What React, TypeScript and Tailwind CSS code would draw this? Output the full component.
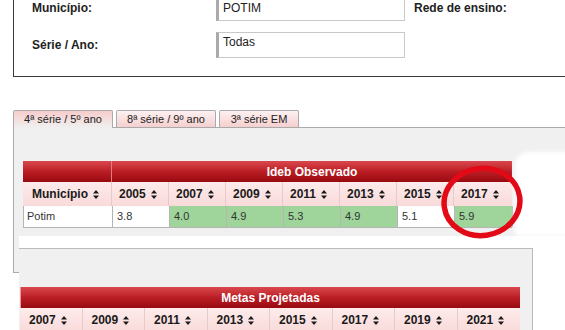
import React from 'react';

const years = ['2005', '2007', '2009', '2011', '2013', '2015', '2017'];
const ideb = [
    { v: '3.8', hit: false },
    { v: '4.0', hit: true },
    { v: '4.9', hit: true },
    { v: '5.3', hit: true },
    { v: '4.9', hit: true },
    { v: '5.1', hit: false },
    { v: '5.9', hit: true },
];
const metaYears = ['2007', '2009', '2011', '2013', '2015', '2017', '2019', '2021'];

const SortIcon = () => (
    <svg width="6" height="9" viewBox="0 0 6 9" className="inline-block ml-[5px] align-[-1px]" fill="currentColor">
        <path d="M3 0 6 3.6H0z M0 5.4h6L3 9z" />
    </svg>
);

const FieldBox = ({ value, h = 'h-[26px]' }: { value: string; h?: string }) => (
    <div className={`w-[189px] ${h} self-end bg-white border border-[#c8c8c8] border-l-[3px] border-l-[#aaa] pl-[4px] pt-[2px] text-[12px] leading-[14px] text-[#222]`}>
        {value}
    </div>
);

const redHead = 'bg-gradient-to-b from-[#d9474d] via-[#bb1d24] to-[#980a10] text-white font-bold text-[12px]';
const pinkHead = 'bg-gradient-to-b from-[#fdebeb] to-[#f9dada] font-bold text-[12px] text-[#1a1a1a]';

export default function App() {
    return (
        <div className="relative w-[565px] h-[330px] overflow-hidden bg-white font-['Liberation_Sans',Arial,sans-serif] text-[#222]">
            {/* filtros */}
            <div className="ml-[13px] -mt-[12px] h-[89px] w-[620px] border-l border-b border-[#3a3a3a] pt-[7px] pl-[18px]">
                <div className="flex items-center h-[26px]">
                    <span className="w-[184px] font-bold text-[12px]">Município:</span>
                    <FieldBox value="POTIM" h="h-[23px]" />
                    <span className="ml-[9px] font-bold text-[12px]">Rede de ensino:</span>
                </div>
                <div className="flex items-center h-[26px] mt-[11px]">
                    <span className="w-[184px] font-bold text-[12px]">Série / Ano:</span>
                    <FieldBox value="Todas" />
                </div>
            </div>

            {/* abas */}
            <div className="flex gap-[3px] ml-[13px] mt-[33px] h-[17px] items-end">
                <div className="relative z-10 w-[100px] h-[18px] -mb-px border border-b-0 border-[#aaa] rounded-t-[2px] bg-gradient-to-b from-[#f6cccc] to-[#f0f0f0] text-[11px] leading-[16px] text-center">
                    4ª série / 5º ano
                </div>
                <div className="w-[100px] h-[17px] border border-b-0 border-[#aaa] rounded-t-[2px] bg-gradient-to-b from-[#fdf1f1] to-[#f5cfcf] text-[11px] leading-[16px] text-center">
                    8ª série / 9º ano
                </div>
                <div className="w-[80px] h-[17px] border border-b-0 border-[#aaa] rounded-t-[2px] bg-gradient-to-b from-[#fdf1f1] to-[#f5cfcf] text-[11px] leading-[16px] text-center">
                    3ª série EM
                </div>
            </div>

            {/* Ideb observado */}
            <div className="ml-[13px] w-[600px] border-l border-t border-[#aaa] bg-[#f0f0f0] pt-[33px] pl-[9px] pb-[8px]">
                <div className="w-[489px]">
                    <div className={`flex h-[21px] ${redHead}`}>
                        <div className="w-[89px] border-r border-[#e27b7f]" />
                        <div className="flex-1 flex items-center justify-center">Ideb Observado</div>
                    </div>
                    <div className={`grid grid-cols-[89px_repeat(6,57px)_58px] h-[24px] ${pinkHead}`}>
                        <div className="flex items-center pl-[9px] border-r border-[#e8caca]">Município<SortIcon /></div>
                        {years.map((y, i) => (
                            <div key={y} className={`flex items-center pl-[7px] ${i < years.length - 1 ? 'border-r border-[#e8caca]' : ''}`}>
                                {y}<SortIcon />
                            </div>
                        ))}
                    </div>
                    <div className="grid grid-cols-[89px_repeat(6,57px)_58px] h-[22px] text-[11px] text-[#333] border-l border-b border-[#b5b5b5]">
                        <div className="flex items-center pl-[3px] bg-white border-r border-[#b5b5b5]">Potim</div>
                        {ideb.map((c, i) => (
                            <div key={i} className={`flex items-center pl-[4px] border-r border-[#b5b5b5] ${c.hit ? 'bg-[#9fd49b]' : 'bg-white'}`}>
                                {c.v}
                            </div>
                        ))}
                    </div>
                </div>
            </div>

            {/* Metas projetadas */}
            <div className="flex ml-[13px]">
                <div className="w-[6px] h-[37px] shrink-0 bg-[#f0f0f0] border-l border-b border-[#aaa]" />
                <div className="flex-1">
                    <div className="h-[12px] bg-white" />
                    <div className="w-[514px] h-[100px] border-t border-r border-[#bbb] bg-[#f0f0f0] pt-[38px] pl-px">
                        <div className="w-[500px]">
                            <div className={`h-[21px] flex items-center justify-center border-l border-[#ec9a9a] ${redHead}`}>
                                Metas Projetadas
                            </div>
                            <div className={`grid grid-cols-8 h-[24px] ${pinkHead}`}>
                                {metaYears.map((y, i) => (
                                    <div key={y} className={`flex items-center pl-[9px] ${i < metaYears.length - 1 ? 'border-r border-[#e8caca]' : ''}`}>
                                        {y}<SortIcon />
                                    </div>
                                ))}
                            </div>
                        </div>
                    </div>
                </div>
            </div>

            {/* recorte branco à direita */}
            <div className="absolute left-[515px] top-[152px] w-[60px] h-[84px] bg-white rounded-tl-[14px] blur-[2px]" />

            {/* destaque 2017 */}
            <svg className="absolute left-[438px] top-[162px]" width="90" height="80" viewBox="0 0 90 80">
                <ellipse cx="44" cy="40" rx="38" ry="33.5" fill="none" stroke="#e20a16" strokeWidth="5.5" transform="rotate(-8 44 40)" />
            </svg>
        </div>
    );
}
